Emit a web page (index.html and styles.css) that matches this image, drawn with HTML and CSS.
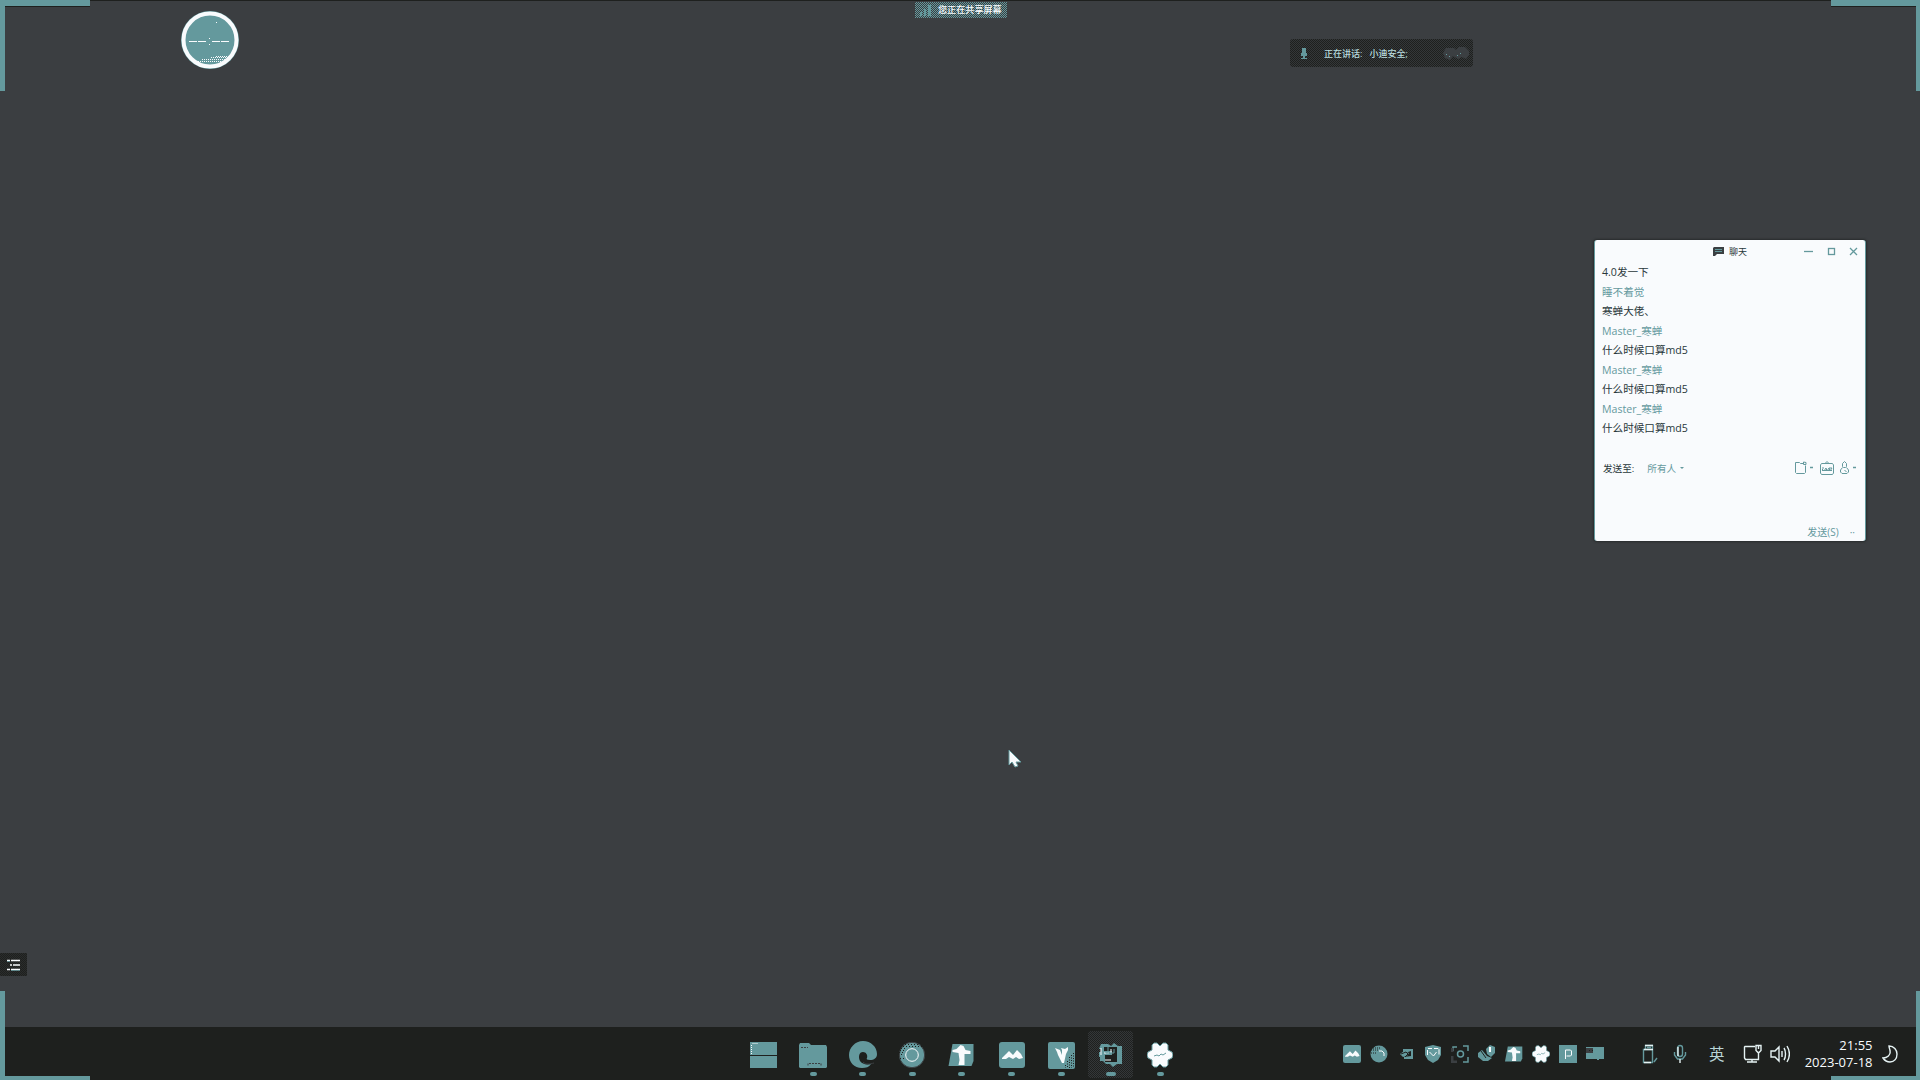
FILE: index.html
```html
<!DOCTYPE html>
<html lang="zh-CN">
<head>
<meta charset="utf-8">
<title>桌面</title>
<link rel="stylesheet" href="styles.css">
</head>
<body>
<svg class="defs" width="0" height="0">
  <defs>
    <symbol id="flower" viewBox="0 0 26 26"><path d="M7 1h3l3 3 3-3h3l2 2v5l4 2 1 3-1 3-4 2v5l-2 2h-3l-3-3-3 3H7l-2-2v-5l-4-2-1-3 1-3 4-2V3z" fill="#f9fbfd" stroke="#64999d"/><path d="M7 14l3-1 2 1 2-2 2 1 3-2" fill="none" stroke="#64999d"/></symbol>
    <symbol id="peaks" viewBox="0 0 26 26"><rect width="26" height="26" rx="3" fill="#64999d"/><path d="M3 16l4-4 3-3 4 4 4-5 4 4 2 4-4 1-3-2-3 2-4-2-3 2H3z" fill="#f9fbfd"/></symbol>
    <symbol id="tshape" viewBox="0 0 26 26"><path d="M4 2h21v17l-2 5H0z" fill="#64999d"/><path d="M4 8l4-1 4-4 3 1 2 4 5 1v3h-6v11h-6l1-5-1-7-6-1z" fill="#f9fbfd"/></symbol>
  </defs>
</svg>
<main class="desktop">
  <i class="corner top-left"></i><i class="corner top-right"></i>
  <i class="corner bottom-left"></i><i class="corner bottom-right"></i>

  <div class="timer">
    <svg width="58" height="58" viewBox="0 0 58 58"><circle cx="29" cy="29" r="29" fill="#64999d"/><circle cx="29" cy="29" r="26.500" fill="none" stroke="#f9fbfd" stroke-width="4"/><path d="M8 30.500h8m1 0h8m6 0h8m1 0h8" stroke="#f9fbfd"/><path d="M28 27h1v1h-1zm0 6h1v1h-1zm7-22h1v1h-1z" fill="#f9fbfd"/><path d="M17 50.500h24M21 48.500h24M30 46.500h18M35 45.500h13" stroke="#f9fbfd" stroke-dasharray="1 1"/></svg>
  </div>

  <div class="share">
    <svg width="15" height="12" viewBox="0 0 15 12" fill="#64999d"><path d="M0 8h2v4H0zm4-3h2v7H4zm4-4h3v11H8z"/></svg>
    <span>您正在共享屏幕</span>
  </div>

  <div class="speaking">
    <svg class="voice" width="8" height="11" viewBox="0 0 8 11"><path d="M2 0h4v6H2zM1 5h6v3H5v2h2v1H1v-1h2V8H1z" fill="#64999d"/></svg>
    <span>正在讲话:</span><span>小迪安全;</span>
    <svg class="blob" width="26" height="14" viewBox="0 0 26 14"><path d="M0 7l3-5h8l2 2 3-3h6l4 4v4l-3 4-4-2-4 2-5-3-3 4-5-2z" fill="#3b3f42"/><path d="M3 8h1v1H3zm3 2h1v1H6zm8-1h1v1h-1zm3-2h1v1h-1z" fill="#64999d"/></svg>
  </div>

  <section class="chat">
    <header class="chat-title">
      <svg width="11" height="9" viewBox="0 0 11 9"><path d="M1 0h10v7H4L2 9H0V1z" fill="#3b3f42"/><path d="M2 2.500h7M2 4.500h7" stroke="#64999d"/></svg>
      <span>聊天</span>
      <div class="controls">
        <svg width="9" height="9" viewBox="0 0 9 9"><path d="M0 4.500h9"/></svg>
        <svg width="9" height="9" viewBox="0 0 9 9"><rect x="1.500" y="1.500" width="6" height="6"/></svg>
        <svg width="9" height="9" viewBox="0 0 9 9"><path d="M1 1l7 7M8 1L1 8"/></svg>
      </div>
    </header>
    <div class="messages">
      <p>4.0发一下</p>
      <p class="name">睡不着觉</p>
      <p>寒蝉大佬、</p>
      <p class="name">Master_寒蝉</p>
      <p>什么时候口算md5</p>
      <p class="name">Master_寒蝉</p>
      <p>什么时候口算md5</p>
      <p class="name">Master_寒蝉</p>
      <p>什么时候口算md5</p>
    </div>
    <div class="send-to">
      <span>发送至:</span><span class="target">所有人</span><i class="caret"></i>
      <div class="tools">
        <svg width="19" height="13" viewBox="0 0 19 13"><path d="M8.500 2.500h-3l-1-1h-4v10l1 1h8l1-1V4.500M8.500 1v2.500h2.500V1.500z"/><path d="M15 6.500h3" stroke-width="1.500"/></svg>
        <svg width="14" height="14" viewBox="0 0 14 14"><path d="M5 2.500l2-2 2 2M.5 4l1-1.500h11L13.500 4v8l-1 1.500h-11L.5 12zM2 8l2 2 2-3 1 3 2-3 1 3 2-3M2 7h2m5 0h3M2 9.500h10"/></svg>
        <svg width="17" height="13" viewBox="0 0 17 13"><path d="M4.500.5l2 2v3l-1 1h-2l-1-1v-3zM2.500 6.500L.5 9v2l1.500 1.500h5L8.500 11V9l-2-2.500M4.500 9l2 2"/><path d="M13 6.500h3" stroke-width="1.500"/></svg>
      </div>
    </div>
    <footer class="send"><span>发送(S)</span><span class="dots">··</span></footer>
  </section>

  <svg class="cursor" width="14" height="19" viewBox="0 0 14 19"><path d="M1 1v15l3-3 3 5 3-1-2-4h5z" fill="#f9fbfd" stroke="#64999d"/></svg>

  <button class="list-toggle">
    <svg width="14" height="12" viewBox="0 0 14 12"><path d="M0 1.500h3m1 0h9M3 6h2m1 0h7M0 10.500h3m1 0h9" stroke="#f9fbfd" stroke-width="1.500"/><path d="M0 2.500h3M4 11.500h9" stroke="#64999d" stroke-width=".7"/></svg>
  </button>
</main>

<nav class="taskbar">
  <div class="apps">
    <div class="app"><svg width="27" height="26" viewBox="0 0 27 26"><path d="M0 0h27v13H0zm0 14h27v12H0z" fill="#64999d"/><path d="M1.500 12V3m1-1.500h6" stroke="#f9fbfd" stroke-dasharray="1 1"/></svg></div>
    <div class="app open"><svg width="28" height="25" viewBox="0 0 28 25"><path d="M0 2l1-2h9l2 2h15l1 2v20l-1 1H1l-1-1z" fill="#64999d"/><path d="M9 22.500v-2m1 0h11m1 0v2M2 4.500h7" fill="none" stroke="#3b3f42" stroke-dasharray="2 1"/></svg></div>
    <div class="app open"><svg width="28" height="28" viewBox="0 0 28 28"><path d="M14 0c8 0 14 6 14 13 0 4-3 6-7 6-3 0-4-1-3-2 1-3-1-6-4-6-4 0-5 5-3 9 2 3 6 4 11 3-2 3-5 4-9 4C5 27 0 21 0 14S6 0 14 0z" fill="#64999d"/><path d="M14 21c3 3 7 2 11 1" fill="none" stroke="#3b3f42"/></svg></div>
    <div class="app open"><svg width="28" height="28" viewBox="0 0 28 28"><circle cx="14" cy="14" r="12.700" fill="#64999d" stroke="#3b3f42"/><path d="M3 7.500h6m-7 2h5m-6 2h6m-7 2h5M5 5.500h19M7 3.500h14M2 17.500h5" stroke="#1e201e" stroke-dasharray="1 2"/><circle cx="14" cy="14" r="6.300" fill="none" stroke="#f9fbfd"/></svg></div>
    <div class="app open"><svg width="27" height="26"><use href="#tshape"/></svg></div>
    <div class="app open"><svg width="26" height="26"><use href="#peaks"/></svg></div>
    <div class="app open"><svg width="27" height="27" viewBox="0 0 27 27"><rect width="27" height="27" rx="2" fill="#64999d"/><path d="M25.500 11v15M23.500 13v13M21.500 15v11M19.500 19v7M17.500 23v3" fill="none" stroke="#1e201e" stroke-dasharray="1 1.500"/><path d="M7 6l5 2 2 5V8l-1-2 4 1 3-2v3l-2 4-2 9h-2l-4-8-1-3z" fill="#f9fbfd"/></svg></div>
    <div class="app open active"><svg width="26" height="26" viewBox="0 0 26 26"><path d="M3 2h7l3 2 3-3 4 3h4v18h-5l-4 3-3-3H8l-3-3H2v-4H1v-5h2V7H1z" fill="#64999d"/><path d="M6 5h13v15H7v-7h7V9H6z" fill="#1e201e"/><path d="M3 6v7m3-2h5m2 0v-4M7 18h6" stroke="#f9fbfd"/><path d="M10 5v5H7m9-3v4H8" fill="none" stroke="#64999d"/></svg></div>
    <div class="app open"><svg width="26" height="26"><use href="#flower"/></svg></div>
  </div>

  <div class="tray">
    <svg><use href="#peaks"/></svg>
    <svg viewBox="0 0 18 18"><circle cx="9" cy="9" r="8.500" fill="#64999d"/><path d="M1 5h7M3 3h8M1 8h5" fill="none" stroke="#1e201e" stroke-dasharray="1 1"/><path d="M9 6h3l2 2v3" fill="none" stroke="#f9fbfd"/></svg>
    <svg viewBox="0 0 18 18"><path d="M6 4h10v10H7v-2l7-1V6L8 8 6 7zM3 9l4-3 5 2-2 3-4 1z" fill="#64999d"/><path d="M4 9l5-2 2 2-3 3" fill="none" stroke="#1e201e"/></svg>
    <svg viewBox="0 0 18 18"><path d="M1 2l4-1 4-1 4 1 4 1v8l-3 5-5 3-5-3-3-5z" fill="#64999d"/><path d="M4 3.500h4m2 0h4l1 1v5M3.500 5v5m2-3l4 4 3-4" fill="none" stroke="#f9fbfd"/></svg>
    <svg viewBox="0 0 18 18" fill="none" stroke="#64999d" stroke-width="1.500"><path d="M2 6V2h4m6-1h5v5m0 6v5h-5"/><path d="M6 17H1v-6M1 3v4" stroke="#3b3f42" stroke-width="3"/><circle cx="9.500" cy="9" r="3"/></svg>
    <svg viewBox="0 0 18 18"><path d="M0 8l4-3 5 6 5 2-4 3H5l-5-4zM8 4l4-4 5 2v6l-4 4-4-3z" fill="#64999d"/><path d="M12 2v5" stroke="#f9fbfd" stroke-width="2"/><path d="M3 6l5 7" stroke="#1e201e"/></svg>
    <svg><use href="#tshape"/></svg>
    <svg><use href="#flower"/></svg>
    <svg viewBox="0 0 18 18"><path d="M0 0h18v18H0z" fill="#64999d"/><path d="M6.500 14V5h5l1 1v4l-1 1h-4" fill="none" stroke="#f9fbfd"/></svg>
    <svg viewBox="0 0 18 18"><path d="M0 2h18v12h-5v1h-2v-1H0z" fill="#64999d"/><path d="M0 3h7v5H0z" fill="#3b3f42"/><path d="M3 5h1v1H3zm3 0h1v1H6z" fill="#1e201e"/></svg>
  </div>

  <div class="system">
    <svg class="usb" width="16" height="20" viewBox="0 0 16 20"><path d="M3.500 5V1.500h7V5M1.500 5.500h9v13h-9zM5 3.500h4M15 14l-3 4"/><path class="bright" d="M3 1.500h8M2 5.500h9M2 18.500h7"/></svg>
    <svg class="mic" width="14" height="20" viewBox="0 0 14 20"><rect x="4.500" y="1.500" width="5" height="11" rx="2.500"/><path d="M1.500 8v3l3 4h5l3-4V8"/><path class="bright" d="M7 15v4M5 3v9"/></svg>
    <span class="ime">英</span>
    <svg class="monitor" width="19" height="19" viewBox="0 0 19 19"><path class="bright" d="M12 2.500H2L1.500 3v11l1 1.500h13V9M4 18h10m-5-3v3m4-16.500h5v5l-2 2h-1l-2-2zM15.500 2v3"/></svg>
    <svg class="speaker" width="20" height="18" viewBox="0 0 20 18"><path class="bright" d="M1 6h4l4-4v14l-4-4H1zM12 6v6m2-9c2 3 2 9 0 12m3-14c3 5 3 11 0 16"/></svg>
    <div class="clock"><span>21:55</span><span>2023-07-18</span></div>
    <svg class="moon" width="16" height="18" viewBox="0 0 16 18"><path class="bright" d="M7 1c5 0 8 4 8 8 0 5-3 8-7 8-3 0-5-1-7-4 4 0 8-3 7-7 0-2-1-3-1-5z"/></svg>
  </div>
</nav>
</body>
</html>
```
FILE: styles.css
```css
:root {
  --ground: #3b3e41;
  --ink: #1e201e;
  --teal: #64999d;
  --paper: #f9fbfd;
}

* { box-sizing: border-box; }

body {
  margin: 0;
  width: 1920px;
  height: 1080px;
  overflow: hidden;
  display: flex;
  flex-direction: column;
  background: var(--ground);
  color: var(--paper);
  font-family: "Open Sans", "Noto Sans CJK SC", sans-serif;
}

svg { display: block; flex: none; }
.defs { position: absolute; }

.desktop {
  flex: 1;
  border-top: 1px solid var(--ink);
}

/* Teal frame marks around the shared screen */
.corner {
  position: absolute;
  z-index: 2;
  width: 90px;
  height: 91px;
  border: 0 solid var(--teal);
}
.top-left { left: 0; top: 0; border-width: 6px 0 0 5px; }
.top-right { right: 0; top: 0; width: 89px; border-width: 6px 4px 0 0; }
.bottom-left { left: 0; bottom: 0; height: 89px; border-width: 0 0 4px 5px; }
.bottom-right { right: 0; bottom: 0; width: 89px; height: 89px; border-width: 0 4px 4px 0; }

.top-left::before,
.top-right::before {
  content: "";
  display: block;
  height: 1px;
  background: var(--ink);
}

.timer { position: absolute; left: 181px; top: 11px; }

.share {
  position: absolute;
  left: 915px;
  top: 2px;
  width: 92px;
  height: 16px;
  padding-left: 5px;
  display: flex;
  align-items: center;
  gap: 3px;
  background: repeating-conic-gradient(var(--teal) 0 25%, var(--ground) 0 50%) 0 0 / 2px 2px;
  font-size: 9.1px;
  font-weight: 500;
  line-height: 16px;
  white-space: nowrap;
}

.speaking {
  position: absolute;
  left: 1290px;
  top: 39px;
  width: 183px;
  height: 28px;
  padding: 0 4px 0 10px;
  display: flex;
  align-items: center;
  gap: 7px;
  border-radius: 3px;
  background: repeating-conic-gradient(var(--ink) 0 25%, #343739 0 50%) 0 0 / 2px 2px;
  color: #b9dcdf;
  font-size: 9px;
  font-weight: 500;
  white-space: nowrap;
}
.voice { margin-right: 9px; }
.blob { margin-left: auto; }

.chat {
  position: absolute;
  left: 1594px;
  top: 240px;
  width: 272px;
  height: 301px;
  display: flex;
  flex-direction: column;
  border: 0 solid var(--teal);
  border-width: 0 1px;
  border-radius: 3px;
  box-shadow: 0 0 2px 1px #292c2d;
  background: var(--paper);
  color: #28373a;
  font-size: 10.6px;
}

.chat-title {
  height: 23px;
  padding: 0 7px 0 118px;
  display: flex;
  align-items: center;
  gap: 5px;
  font-size: 9px;
}
.controls {
  margin-left: auto;
  display: flex;
  gap: 13.5px;
  fill: none;
  stroke: var(--teal);
  stroke-width: 1.3;
}

.messages { padding: 0 7px; }
.messages p {
  margin: 0;
  line-height: 19.5px;
}
.messages .name { color: var(--teal); }

.send-to {
  height: 24px;
  margin-top: 17px;
  padding: 0 8px;
  display: flex;
  align-items: center;
  font-size: 9.6px;
}
.target { margin-left: 13px; color: var(--teal); }
.caret {
  margin-left: 4px;
  border: 2px solid transparent;
  border-top-color: var(--teal);
  border-bottom: 0;
}
.tools {
  margin-left: auto;
  display: flex;
  align-items: center;
  gap: 6px;
  fill: none;
  stroke: var(--teal);
}

.send {
  margin-top: auto;
  padding-right: 10px;
  height: 17px;
  display: flex;
  justify-content: flex-end;
  gap: 11px;
  color: var(--teal);
  font-size: 10px;
  line-height: 17px;
}

.cursor { position: absolute; left: 1008px; top: 749px; }

.list-toggle {
  position: absolute;
  left: 0;
  top: 953px;
  width: 27px;
  height: 23px;
  padding: 0 0 0 7px;
  border: 0;
  background: repeating-conic-gradient(var(--ink) 0 25%, #2a2c2c 0 50%) 0 0 / 2px 2px;
}

.taskbar {
  height: 53px;
  display: flex;
  background: var(--ink);
}

.apps {
  width: 446px;
  margin-left: 739px;
  display: grid;
  grid-template-columns: repeat(9, 1fr);
}
.app {
  position: relative;
  display: flex;
  align-items: center;
  justify-content: center;
  padding-top: 3px;
}
.app.open::after {
  content: "";
  position: absolute;
  bottom: 4px;
  width: 7px;
  height: 4px;
  border-radius: 2px;
  background: var(--teal);
}
.app.active {
  margin: 4px 2px 2px;
  padding: 0;
  border-radius: 3px;
  background: repeating-conic-gradient(var(--ink) 0 25%, #343739 0 50%) 0 0 / 2px 2px;
}
.app.active::after { bottom: 2px; width: 10px; }

.tray {
  margin-left: 158px;
  display: flex;
  align-items: center;
  gap: 9px;
}
.tray svg { width: 18px; height: 18px; }

.system {
  margin-left: 38px;
  display: flex;
  align-items: center;
  fill: none;
  stroke: var(--teal);
  stroke-width: 1.4;
}
.bright { stroke: #e6f3f4; }
.mic { margin-left: 15px; }
.ime {
  margin-left: 22px;
  color: #b9d4d6;
  font-size: 15.5px;
  line-height: 20px;
}
.monitor { margin-left: 18px; }
.speaker { margin-left: 8px; }
.clock {
  width: 70px;
  margin-left: 13px;
  display: flex;
  flex-direction: column;
  align-items: flex-end;
  font-size: 13px;
  line-height: 17px;
}
.moon { margin-left: 9px; }
```
